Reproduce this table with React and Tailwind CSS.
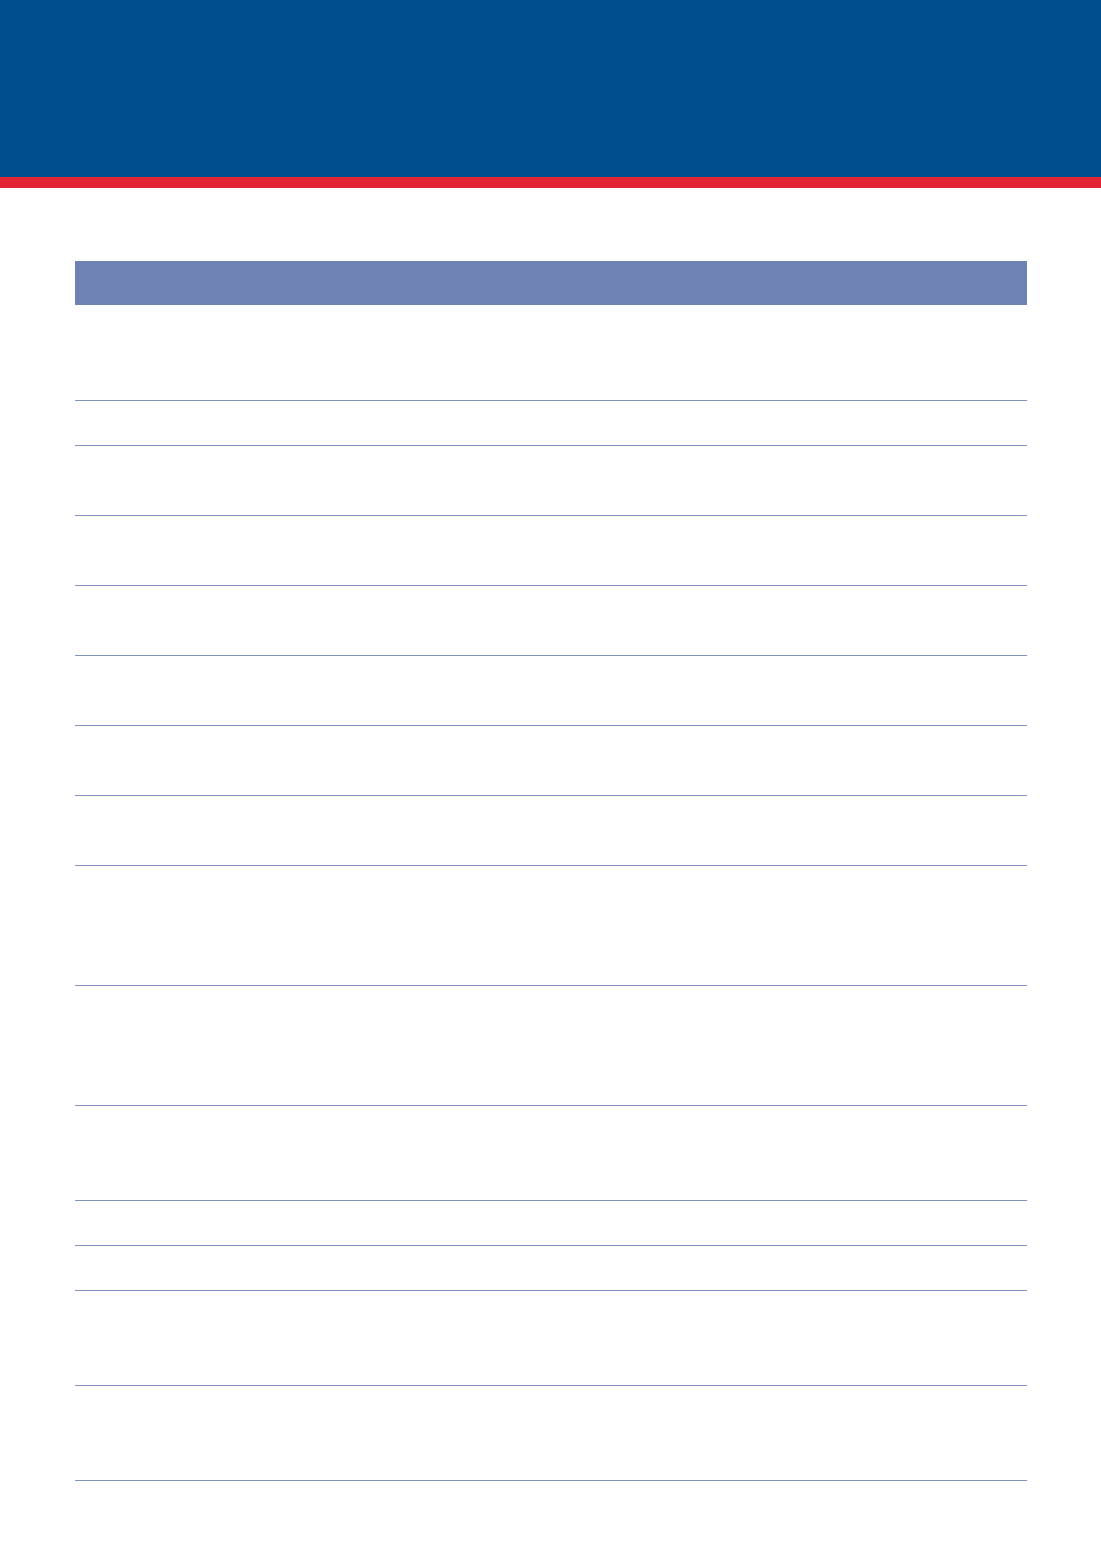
const ROWS = [96, 45, 70, 70, 70, 70, 70, 70, 120, 120, 95, 45, 45, 95, 95];

export default function App() {
    return (
        <div className="min-h-[1562px] w-full bg-white font-['Liberation_Sans',sans-serif]">
            <div className="h-[177px] bg-[#004e8d]" />
            <div className="h-[11px] bg-[#e32235]" />

            <div className="px-[75px] pt-[73px] w-[1102px]">
                <div className="h-[44px] bg-[#6e82b3]" />
                {ROWS.map((h, i) => (
                    <div
                        key={i}
                        className="border-b border-[#8193c2]"
                        style={{ height: h }}
                    />
                ))}
            </div>
        </div>
    );
}
